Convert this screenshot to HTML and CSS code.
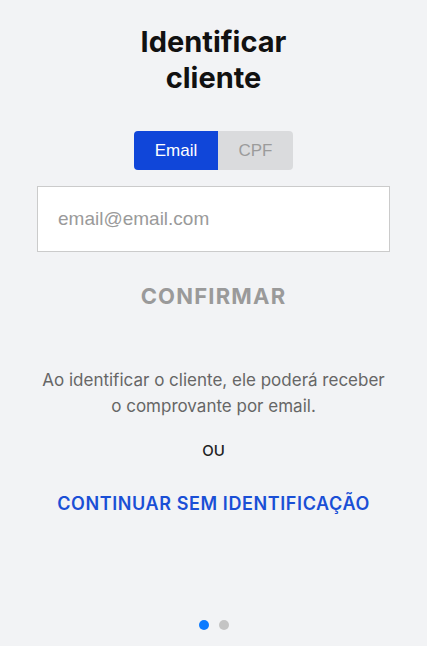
FILE: index.html
```html
<!DOCTYPE html>
<html lang="pt">
<head>
<meta charset="utf-8">
<link rel="stylesheet" href="styles.css">
</head>
<body>
<main class="screen">
  <h1 class="title">Identificar<br>cliente</h1>
  <div class="tabs">
    <button class="tab tab-active">Email</button>
    <button class="tab">CPF</button>
  </div>
  <div class="field">
    <input class="input" type="text" placeholder="email@email.com">
  </div>
  <div class="confirm">CONFIRMAR</div>
  <p class="info">Ao identificar o cliente, ele poderá receber<br>o comprovante por email.</p>
  <div class="or">OU</div>
  <a class="skip">CONTINUAR SEM IDENTIFICAÇÃO</a>
  <div class="dots">
    <span class="dot dot-active"></span>
    <span class="dot"></span>
  </div>
</main>
</body>
</html>
```
FILE: styles.css
```css
html, body {
  margin: 0;
  padding: 0;
  background: #f2f3f5;
}
.screen {
  width: 427px;
  height: 646px;
  display: flex;
  flex-direction: column;
  align-items: center;
  font-family: "Inter", "Liberation Sans", sans-serif;
}
.title {
  margin: 24px 0 0;
  font-size: 29px;
  font-weight: 700;
  line-height: 36px;
  text-align: center;
  color: #111;
}
.tabs {
  display: flex;
  margin-top: 35px;
  border-radius: 4px;
  overflow: hidden;
}
.tab {
  border: 0;
  height: 39px;
  width: 75px;
  background: #dadbdd;
  color: #9b9b9b;
  font-family: "Liberation Sans", Arial, sans-serif;
  font-size: 17px;
  padding: 0;
}
.tab-active {
  width: 84px;
  background: #1046d9;
  color: #fff;
}
.field {
  margin-top: 16px;
  width: 353px;
}
.input {
  box-sizing: border-box;
  width: 100%;
  height: 66px;
  border: 1px solid #cbcbcb;
  background: #fff;
  padding: 0 20px;
  font-family: "Liberation Sans", Arial, sans-serif;
  font-size: 19px;
  outline: none;
}
.input::placeholder {
  color: #9a9a9a;
}
.confirm {
  margin-top: 31px;
  font-size: 22px;
  font-weight: 700;
  color: #9a9a9a;
  line-height: 26px;
  letter-spacing: 1.2px;
}
.info {
  margin: 58px 0 0;
  font-size: 17px;
  line-height: 26px;
  color: #666;
  text-align: center;
}
.or {
  margin-top: 22px;
  font-size: 15px;
  font-weight: 500;
  color: #222;
}
.skip {
  margin-top: 33px;
  font-size: 18px;
  font-weight: 600;
  color: #1a4fd6;
  letter-spacing: 0.6px;
}
.dots {
  display: flex;
  gap: 10px;
  margin-top: auto;
  margin-bottom: 16px;
}
.dot {
  width: 10px;
  height: 10px;
  border-radius: 50%;
  background: #c4c4c4;
}
.dot-active {
  background: #0a7aff;
}
```
